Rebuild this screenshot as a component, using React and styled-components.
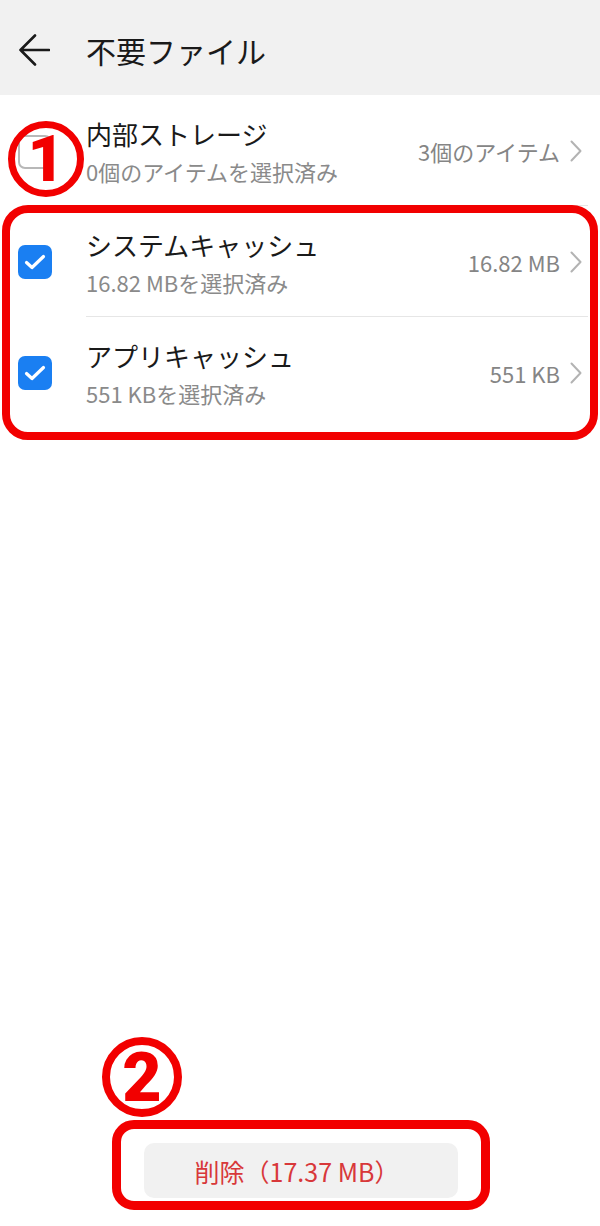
import React from "react";
import styled, { createGlobalStyle } from "styled-components";

const GlobalStyle = createGlobalStyle`
  html, body {
    margin: 0;
    padding: 0;
    background: #ffffff;
  }
  body {
    font-family: "Noto Sans CJK JP", "Noto Sans", sans-serif;
  }
`;

/* PAGE */
const Page = styled.div`
  position: relative;
  width: 600px;
  min-height: 1226px;
  display: flex;
  flex-direction: column;
  background: #ffffff;
  overflow: hidden;
`;

/* HEADER */
const Header = styled.div`
  height: 95px;
  background-color: #f1f1f1;
  display: flex;
  align-items: center;
  padding-left: 18px;
  gap: 36px;
  box-sizing: border-box;
`;

const BackButton = styled.div`
  width: 32px;
  height: 32px;
  display: flex;
  margin-top: 4px;
`;

const Title = styled.div`
  font-size: 30px;
  color: #1a1a1a;
  line-height: 40px;
  margin-top: 4px;
`;

/* LIST */
const List = styled.div`
  flex: 1;
`;

const Row = styled.div`
  position: relative;
  display: flex;
  align-items: center;
  height: 111px;
  padding: 0 18px;
  box-sizing: border-box;

  &:not(:last-child)::after {
    content: "";
    position: absolute;
    left: 86px;
    right: 12px;
    bottom: 0;
    height: 1px;
    background: #e6e6e6;
  }
`;

const Check = styled.div`
  width: 34px;
  height: 34px;
  border-radius: 7px;
  box-sizing: border-box;
  flex-shrink: 0;
  display: flex;
  align-items: center;
  justify-content: center;
  background: ${(p) => (p.checked ? "#1a7ff2" : "#ffffff")};
  border: ${(p) => (p.checked ? "none" : "2px solid #b8b8b8")};
  margin-top: ${(p) => (p.checked ? "0" : "2px")};
`;

const TextBlock = styled.div`
  flex: 1;
  margin-left: 34px;
  display: flex;
  flex-direction: column;
  padding-top: 1px;
`;

const ItemTitle = styled.div`
  font-size: 26px;
  line-height: 36px;
  color: #1a1a1a;
`;

const ItemSub = styled.div`
  font-size: 22px;
  line-height: 30px;
  color: #8a8a8a;
  margin-top: 4px;
`;

const Value = styled.div`
  display: flex;
  align-items: center;
  gap: 10px;
  font-size: 22px;
  color: #858585;
  margin-top: 1px;
`;

/* FOOTER */
const Footer = styled.div`
  display: flex;
  justify-content: center;
  padding-bottom: 28px;
  padding-left: 2px;
`;

const DeleteButton = styled.div`
  width: 314px;
  height: 55px;
  border-radius: 10px;
  background: #f1f1f1;
  color: #d8383a;
  font-size: 25px;
  display: flex;
  align-items: center;
  justify-content: center;
  padding-right: 8px;
  box-sizing: border-box;
`;

/* ANNOTATIONS */
const Frame = styled.div`
  position: absolute;
  left: ${(p) => p.left}px;
  top: ${(p) => p.top}px;
  width: ${(p) => p.width}px;
  height: ${(p) => p.height}px;
  border: ${(p) => p.stroke}px solid #f20000;
  border-radius: ${(p) => p.radius}px;
  box-sizing: border-box;
  pointer-events: none;
`;

const Badge = styled.div`
  position: absolute;
  left: ${(p) => p.left}px;
  top: ${(p) => p.top}px;
  width: ${(p) => p.size}px;
  height: ${(p) => p.size}px;
  border: ${(p) => p.stroke}px solid #f20000;
  border-radius: 50%;
  box-sizing: border-box;
  display: flex;
  align-items: center;
  justify-content: center;
  color: #f20000;
  font-family: Roboto, "Noto Sans", sans-serif;
  font-weight: 900;
  font-size: ${(p) => p.fontSize}px;
  line-height: 1;
`;

const BadgeNum = styled.span`
  display: block;
  transform: translateY(${(p) => p.shift}px);
`;

function Chevron() {
  return (
    <svg width="12" height="22" viewBox="0 0 12 22">
      <polyline
        points="1.5,1.5 10.5,11 1.5,20.5"
        fill="none"
        stroke="#b3b3b3"
        strokeWidth="2"
        strokeLinecap="round"
        strokeLinejoin="round"
      />
    </svg>
  );
}

function Tick() {
  return (
    <svg width="22" height="16" viewBox="0 0 22 16">
      <polyline
        points="2.5,8.5 8,13.5 19.5,2.5"
        fill="none"
        stroke="#ffffff"
        strokeWidth="3.2"
        strokeLinecap="round"
        strokeLinejoin="round"
      />
    </svg>
  );
}

const items = [
  { title: "内部ストレージ", sub: "0個のアイテムを選択済み", value: "3個のアイテム", checked: false },
  { title: "システムキャッシュ", sub: "16.82 MBを選択済み", value: "16.82 MB", checked: true },
  { title: "アプリキャッシュ", sub: "551 KBを選択済み", value: "551 KB", checked: true },
];

export default function App() {
  return (
    <>
      <GlobalStyle />
      <Page>
        <Header>
          <BackButton>
            <svg width="32" height="32" viewBox="0 0 32 32">
              <path
                d="M2.5 16H31M17 1.5 2.5 16 17 30.5"
                fill="none"
                stroke="#1a1a1a"
                strokeWidth="2.6"
                strokeLinecap="round"
                strokeLinejoin="round"
              />
            </svg>
          </BackButton>
          <Title>不要ファイル</Title>
        </Header>

        <List>
          {items.map((it) => (
            <Row key={it.title}>
              <Check checked={it.checked}>{it.checked && <Tick />}</Check>
              <TextBlock>
                <ItemTitle>{it.title}</ItemTitle>
                <ItemSub>{it.sub}</ItemSub>
              </TextBlock>
              <Value>
                {it.value}
                <Chevron />
              </Value>
            </Row>
          ))}
        </List>

        <Footer>
          <DeleteButton>削除（17.37 MB）</DeleteButton>
        </Footer>

        <Badge left={8} top={121} size={76} stroke={7} fontSize={64}>
          <BadgeNum shift={1}>1</BadgeNum>
        </Badge>
        <Frame left={2} top={205} width={596} height={235} stroke={8} radius={26} />

        <Badge left={102} top={1037} size={80} stroke={8} fontSize={68}>
          <BadgeNum shift={1}>2</BadgeNum>
        </Badge>
        <Frame left={112} top={1120} width={378} height={90} stroke={9} radius={22} />
      </Page>
    </>
  );
}
